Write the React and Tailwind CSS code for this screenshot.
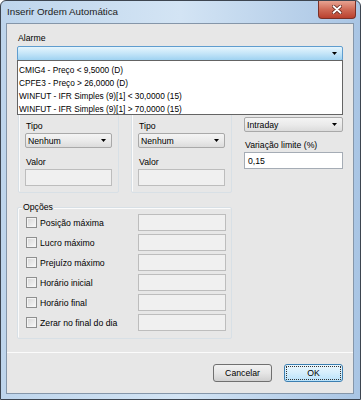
import React from "react"

const Arrow = () => (
  <svg width="5" height="3" viewBox="0 0 5 3" className="shrink-0">
    <path d="M0 0H5L2.5 3Z" fill="#000" />
  </svg>
)

const Combo = ({ text, width }) => (
  <div className={`${width} h-[15px] border border-[#a9a9a9] rounded-[2px] bg-gradient-to-b from-[#f4f4f4] via-[#ebebeb] to-[#dcdcdc] flex items-center justify-between pl-[2px] pr-[5px]`}>
    <span className="text-[8.7px] leading-[12px] text-black">{text}</span>
    <Arrow />
  </div>
)

const CondGroup = ({ width }) => (
  <div className={`${width} h-[123px] border border-[#d8e0e6] rounded-[2px] shadow-[inset_1px_1px_0_#fbfbfb] pt-[49px] px-[6px]`}>
    <div className="text-[8.7px] leading-[12px] text-black pl-[1px]">Tipo</div>
    <div className="mt-[1px]">
      <Combo text="Nenhum" width="w-[87px]" />
    </div>
    <div className="mt-[8px] text-[8.7px] leading-[12px] text-black pl-[1px]">Valor</div>
    <div className="mt-[1px] w-[87px] h-[17px] border border-[#bdbdbd] bg-[#f0f0f0]" />
  </div>
)

const options = [
  "Posição máxima",
  "Lucro máximo",
  "Prejuízo máximo",
  "Horário inicial",
  "Horário final",
  "Zerar no final do dia",
]

const alarms = [
  "CMIG4 - Preço < 9,5000 (D)",
  "CPFE3 - Preço > 26,0000 (D)",
  "WINFUT - IFR Simples (9)[1] < 30,0000 (15)",
  "WINFUT - IFR Simples (9)[1] > 70,0000 (15)",
]

export default function App() {
  return (
    <div className="w-[361px] h-[400px] font-['Liberation_Sans',Arial,sans-serif] text-black">
      <div className="w-[361px] h-[400px] border border-[#3d4550] rounded-t-[6px] bg-gradient-to-r from-[#bed5ec] via-[#d3e4f4] to-[#a9c5e4] flex flex-col">
        {/* title bar */}
        <div className="h-[22px] flex items-start justify-between">
          <div className="pl-[6px] pt-[5px] text-[9.8px] leading-[12px] text-[#1b1b1b]">Inserir Ordem Automática</div>
          <div className="mr-[4px] w-[38px] h-[18px] rounded-b-[4px] border border-t-0 border-[#7a3027] bg-gradient-to-b from-[#e7a392] via-[#cf6a56] to-[#b9402e] flex items-center justify-center">
            <svg width="10" height="9" viewBox="0 0 10 9">
              <path d="M1.5 1.2L8.5 7.8M8.5 1.2L1.5 7.8" stroke="#5b1d14" strokeWidth="3.4" strokeLinecap="round" />
              <path d="M1.5 1.2L8.5 7.8M8.5 1.2L1.5 7.8" stroke="#fff" strokeWidth="1.9" strokeLinecap="round" />
            </svg>
          </div>
        </div>

        {/* client */}
        <div className="flex-1 pl-[5px] pr-[6px] pb-[5px]">
          <div className="h-full border border-[#8596a9] bg-[#e7e7e7] flex flex-col relative">
            <div className="pl-[10px] pr-[9px] pt-[8px]">
              <div className="text-[8.7px] leading-[12px] pl-[1px]">Alarme</div>
              <div className="mt-[2px] w-[326px] h-[15px] border border-[#5f9dcf] rounded-[2px] bg-gradient-to-b from-[#e6f5fd] via-[#c4e5f8] to-[#9fd2f1] flex items-center justify-end pr-[5px]">
                <Arrow />
              </div>

              <div className="mt-[9px] flex items-start">
                <div className="ml-[1px]">
                  <CondGroup width="w-[101px]" />
                </div>
                <div className="ml-[12px]">
                  <CondGroup width="w-[101px]" />
                </div>
                <div className="ml-[12px] pt-[47px] flex flex-col">
                  <Combo text="Intraday" width="w-[99px]" />
                  <div className="mt-[7px] text-[8.7px] leading-[12px] pl-[1px]">Variação limite (%)</div>
                  <div className="mt-[1px] w-[99px] h-[17px] border border-[#a5acb5] bg-white flex items-center pl-[3px] text-[8.7px] leading-[12px]">
                    0,15
                  </div>
                </div>
              </div>

              <div className="mt-[14px] w-[215px] h-[132px] border border-[#d8e0e6] rounded-[2px] shadow-[inset_1px_1px_0_#fbfbfb] relative pt-[6px] pl-[8px]">
                <span className="absolute left-[4px] -top-[7px] px-[1px] bg-[#e7e7e7] text-[8.7px] leading-[12px]">Opções</span>
                <div className="flex flex-col gap-[3px]">
                  {options.map((o) => (
                    <div key={o} className="flex items-center h-[17px]">
                      <div className="w-[112px] flex items-center">
                        <div className="w-[11px] h-[11px] border border-[#8e8f8f] bg-gradient-to-br from-[#d6d6d6] to-[#fafafa] shadow-[inset_0_0_0_1px_#f4f4f4]" />
                        <span className="ml-[3px] text-[8.7px] leading-[12px]">{o}</span>
                      </div>
                      <div className="w-[88px] h-[17px] border border-[#bdbdbd] bg-[#f0f0f0]" />
                    </div>
                  ))}
                </div>
              </div>
            </div>

            <div className="mt-[13px] h-px bg-[#fbfbfb]" />

            <div className="mt-[11px] flex justify-end gap-[12px] pr-[10px]">
              <button className="w-[59px] h-[18px] border border-[#707070] rounded-[3px] bg-gradient-to-b from-[#f2f2f2] via-[#e6e6e6] to-[#d0d0d0] text-[8.7px] leading-[12px]">
                Cancelar
              </button>
              <button className="w-[59px] h-[18px] border border-[#3c7fb1] rounded-[3px] bg-gradient-to-b from-[#eaf6fd] via-[#d5eefc] to-[#b9e2fa] p-[1px]">
                <div className="h-full border border-dotted border-[#333] flex items-center justify-center text-[8.7px] leading-[12px]">
                  OK
                </div>
              </button>
            </div>

            {/* open dropdown list */}
            <div className="absolute left-[10px] top-[36px] w-[326px] h-[55px] border border-[#646464] bg-white pt-[2px] pl-[1px]">
              {alarms.map((a) => (
                <div key={a} className="h-[13px] flex items-center text-[8.3px] leading-[12px]">
                  {a}
                </div>
              ))}
            </div>
          </div>
        </div>
      </div>
    </div>
  )
}
